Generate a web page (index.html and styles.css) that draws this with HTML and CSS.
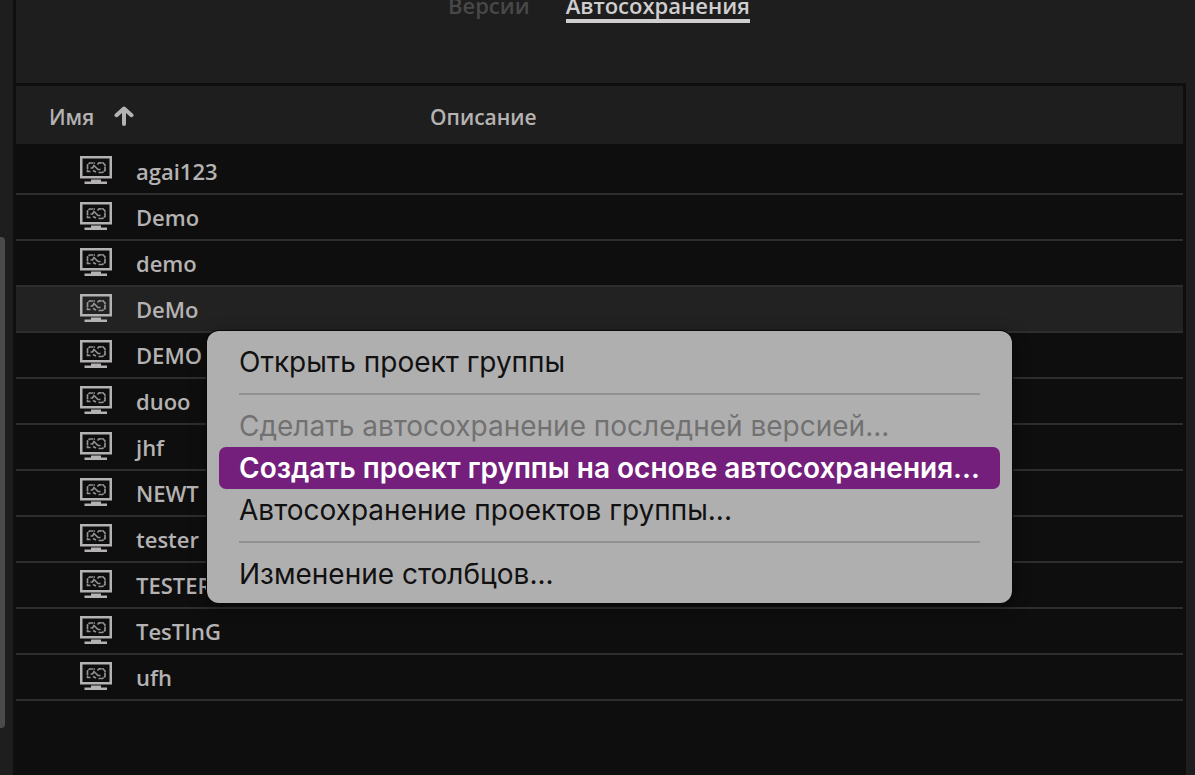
FILE: index.html
```html
<!DOCTYPE html>
<html lang="ru">
<head>
<meta charset="utf-8">
<meta name="viewport" content="width=device-width, initial-scale=1">
<title>Автосохранения</title>
<link rel="stylesheet" href="styles.css">
</head>
<body>
<svg class="sprite" aria-hidden="true">
  <symbol id="project" viewBox="0 0 32 28">
    <rect x="1.25" y="1.25" width="29.5" height="20" fill="none" stroke="currentColor" stroke-width="2.5"/>
    <path d="M11 23.500h10v2h6V28H4.500v-2.500H11z" fill="currentColor"/>
    <g fill="none" stroke="currentColor" stroke-width="1.700" opacity=".8">
      <path d="M10.500 15.500H7.500V9L9.500 7H15" stroke-dasharray="5 .5"/>
      <path d="M10.500 12h2l1.500-2.500 4 4h2.500"/>
      <path d="M13 14.500l3 1.500"/>
      <path d="M17.500 8.500L19 6.800h4L25 9v5.500L22.500 16.500H18" stroke-dasharray="5 .5"/>
    </g>
  </symbol>
</svg>
<div class="app">
  <aside class="rail"><div class="thumb"></div></aside>
  <main class="panel">
    <nav class="tabs">
      <button class="tab" type="button">Версии</button>
      <button class="tab tab-active" type="button">Автосохранения</button>
    </nav>
    <div class="list">
      <table class="projects">
        <thead>
          <tr>
            <th class="name-col" scope="col"><span class="sort">Имя
              <svg class="arrow" viewBox="0 0 20 20" aria-hidden="true"><path d="M10 18V3M2.500 9.200L10 2.500l7.500 6.700" fill="none" stroke="currentColor" stroke-width="4" stroke-linecap="round" stroke-linejoin="round"/></svg></span></th>
            <th scope="col">Описание</th>
          </tr>
        </thead>
        <tbody>
          <tr><td><span class="name"><svg class="icon"><use href="#project"/></svg>agai123</span></td><td></td></tr>
          <tr><td><span class="name"><svg class="icon"><use href="#project"/></svg>Demo</span></td><td></td></tr>
          <tr><td><span class="name"><svg class="icon"><use href="#project"/></svg>demo</span></td><td></td></tr>
          <tr class="selected"><td><span class="name"><svg class="icon"><use href="#project"/></svg>DeMo</span></td><td></td></tr>
          <tr><td><span class="name"><svg class="icon"><use href="#project"/></svg>DEMO</span></td><td></td></tr>
          <tr><td><span class="name"><svg class="icon"><use href="#project"/></svg>duoo</span></td><td></td></tr>
          <tr><td><span class="name"><svg class="icon"><use href="#project"/></svg>jhf</span></td><td></td></tr>
          <tr><td><span class="name"><svg class="icon"><use href="#project"/></svg>NEWT</span></td><td></td></tr>
          <tr><td><span class="name"><svg class="icon"><use href="#project"/></svg>tester</span></td><td></td></tr>
          <tr><td><span class="name"><svg class="icon"><use href="#project"/></svg>TESTER</span></td><td></td></tr>
          <tr><td><span class="name"><svg class="icon"><use href="#project"/></svg>TesTInG</span></td><td></td></tr>
          <tr><td><span class="name"><svg class="icon"><use href="#project"/></svg>ufh</span></td><td></td></tr>
        </tbody>
      </table>
    </div>
  </main>
</div>
<div class="menu" role="menu">
  <button class="item" type="button" role="menuitem">Открыть проект группы</button>
  <hr class="rule">
  <button class="item" type="button" role="menuitem" disabled>Сделать автосохранение последней версией...</button>
  <button class="item item-active" type="button" role="menuitem">Создать проект группы на основе автосохранения...</button>
  <button class="item" type="button" role="menuitem">Автосохранение проектов группы...</button>
  <hr class="rule">
  <button class="item" type="button" role="menuitem">Изменение столбцов...</button>
</div>
</body>
</html>
```
FILE: styles.css
```css
* { box-sizing: border-box; }

body {
  margin: 0;
  background: #1e1e1e;
  color: #b4b2b2;
  font-family: "Open Sans", "Noto Sans", sans-serif;
  font-size: 22px;
}

button {
  margin: 0;
  border: 0;
  background: none;
  font: inherit;
  color: inherit;
}

.sprite { display: none; }

.app {
  display: flex;
  min-height: 100vh;
}

.rail {
  flex: none;
  width: 16px;
  padding-top: 237px;
  border-right: 3px solid #0f0f0f;
}

.thumb {
  width: 5px;
  height: 491px;
  background: #4b4b4b;
  border-radius: 0 4px 4px 0;
}

.panel {
  flex: 1;
  display: flex;
  flex-direction: column;
  padding-right: 9px;
}

.tabs {
  display: flex;
  align-items: flex-start;
  gap: 36px;
  height: 83px;
  padding-left: 432px;
}

.tab {
  padding: 0 0 9px;
  border-bottom: 4px solid transparent;
  color: #484848;
  font-weight: 600;
  line-height: 10px;
}

.tab-active {
  border-color: #d0cecf;
  color: #d0cecf;
}

.list {
  flex: 1;
  padding-right: 3px;
  border-top: 3px solid #0f0f0f;
  background: #0e0e0e;
}

.projects {
  width: 100%;
  border-collapse: separate;
  border-spacing: 0;
}

th {
  height: 63px;
  padding: 4px 0 0;
  background: #1e1e1e;
  border-bottom: 5px solid #0e0e0e;
  font-size: 21px;
  font-weight: 600;
  text-align: left;
}

.name-col {
  width: 414px;
  padding-left: 33px;
}

.sort {
  display: flex;
  align-items: center;
  gap: 20px;
}

.arrow {
  width: 20px;
  height: 20px;
  margin-bottom: 2px;
}

td {
  height: 46px;
  padding: 0;
  border-bottom: 2px solid #2e2e2e;
}

.name {
  display: flex;
  align-items: center;
  gap: 24px;
  padding-left: 64px;
  font-weight: 600;
  line-height: 44px;
}

.icon {
  width: 32px;
  height: 28px;
  margin-bottom: 2px;
}

.selected td { background: #222; }

.menu {
  position: absolute;
  top: 331px;
  left: 207px;
  width: 805px;
  padding: 10px 12px 8px;
  background: #b0afb0;
  border-radius: 12px;
  box-shadow: 0 0 0 1px #080808, 0 4px 16px rgba(0, 0, 0, .5);
  color: #111;
  font-family: Inter, "Open Sans", sans-serif;
  font-size: 28px;
}

.item {
  display: block;
  width: 100%;
  height: 42px;
  padding: 0 20px;
  border-radius: 7px;
  text-align: left;
  line-height: 42px;
  white-space: nowrap;
}

.item:disabled { color: #727172; }

.item-active {
  background: #741f7c;
  color: #fff;
  font-weight: 600;
}

.rule {
  height: 2px;
  margin: 10px 20px;
  border: 0;
  background: #929092;
}
```
